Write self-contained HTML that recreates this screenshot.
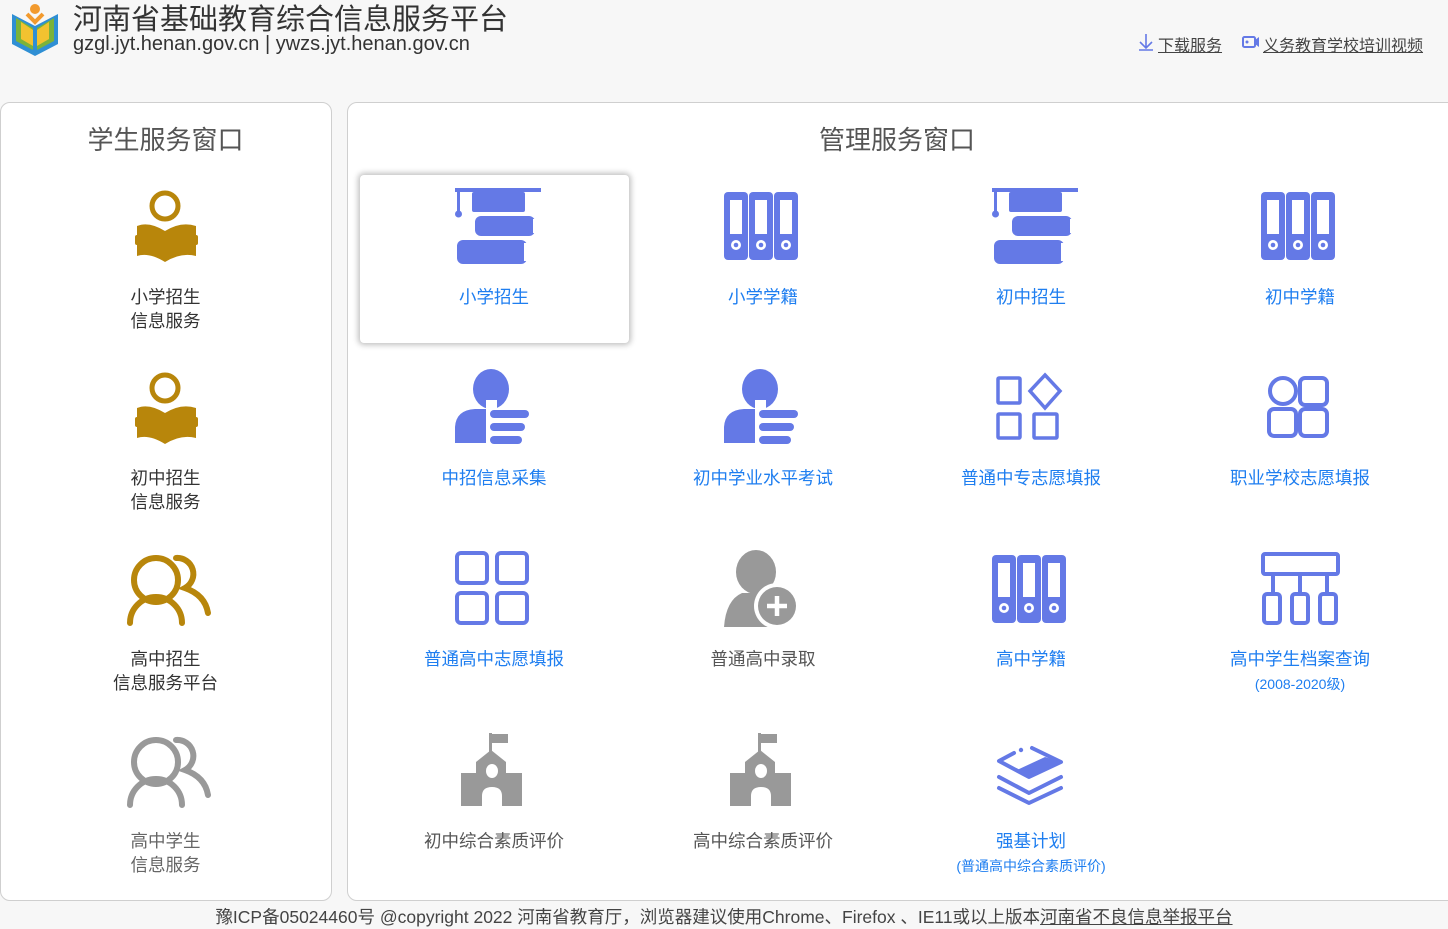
<!DOCTYPE html>
<html><head><meta charset="utf-8">
<style>
body{margin:0;width:1448px;height:926px;background:#f7f7f7;font-family:"Liberation Sans","Noto Sans CJK SC",sans-serif;position:relative;overflow:hidden}
.a{position:absolute}
.panel{position:absolute;background:#fff;border:1px solid #cfcfcf;border-radius:10px}
.t{position:absolute;text-align:center;font-size:17.5px;line-height:24px;color:#1e7ef0;width:268px}
.g{color:#555}
.lt{position:absolute;text-align:center;font-size:17.5px;line-height:24px;color:#333;width:331px;left:0}
.sm{font-size:14px;line-height:18px}
</style></head><body>
<div class="a" style="left:73px;top:-4px;font-size:29px;color:#333;white-space:nowrap">河南省基础教育综合信息服务平台</div>
<div class="a" style="left:73px;top:33px;font-size:20px;color:#333;white-space:nowrap">gzgl.jyt.henan.gov.cn | ywzs.jyt.henan.gov.cn</div>
<div class="a" style="left:1158px;top:32px;font-size:16px;color:#444;text-decoration:underline">下载服务</div>
<div class="a" style="left:1263px;top:32px;font-size:16px;color:#444;text-decoration:underline">义务教育学校培训视频</div>

<div class="panel" style="left:0;top:102px;width:330px;height:797px"></div>
<div class="panel" style="left:347px;top:102px;width:1110px;height:797px"></div>
<div class="a" style="left:360px;top:175px;width:269px;height:168px;background:#fff;border-radius:4px;box-shadow:0 0 6px 2px rgba(0,0,0,.25)"></div>

<div class="a" style="left:0;top:120px;width:331px;text-align:center;font-size:26px;color:#555">学生服务窗口</div>
<div class="a" style="left:347px;top:120px;width:1100px;text-align:center;font-size:26px;color:#555">管理服务窗口</div>

<svg class="a" style="left:0;top:0" width="1448" height="926">
<defs>
<g id="books" fill="#6479e6"><rect x="0" y="0" width="86" height="4"/><rect x="17" y="4" width="53" height="20" rx="2"/><rect x="2" y="2" width="3" height="22"/><circle cx="3.5" cy="26" r="3.5"/><rect x="20" y="28" width="60" height="20" rx="6"/><rect x="78" y="31" width="3" height="14" fill="#fff"/><rect x="2" y="52" width="70" height="24" rx="6"/><rect x="69" y="55" width="3" height="18" fill="#fff"/></g>
<g id="bind"><g fill="#6479e6"><rect x="0" y="0" width="24" height="68" rx="4"/><rect x="25" y="0" width="24" height="68" rx="4"/><rect x="50" y="0" width="24" height="68" rx="4"/></g><g fill="#fff"><rect x="6" y="8" width="12" height="34"/><rect x="31" y="8" width="12" height="34"/><rect x="56" y="8" width="12" height="34"/><circle cx="12" cy="53" r="5"/><circle cx="37" cy="53" r="5"/><circle cx="62" cy="53" r="5"/></g><g fill="#6479e6"><circle cx="12" cy="53" r="2.3"/><circle cx="37" cy="53" r="2.3"/><circle cx="62" cy="53" r="2.3"/></g></g>
<g id="plist" fill="#6479e6"><ellipse cx="36" cy="20" rx="18" ry="20"/><path d="M0 74V58Q1 41 20 40H34V74Z"/><path d="M31 31H42V74H31Z" fill="#fff"/><path d="M33 74V48Q33 42 39 42H40V74Z" fill="#fff"/><rect x="35" y="41" width="39" height="8" rx="4"/><rect x="35" y="54" width="35" height="8" rx="4"/><rect x="35" y="67" width="32" height="8" rx="4"/></g>
<g id="reader" fill="#b8860b"><circle cx="28" cy="18" r="13" fill="none" stroke="#b8860b" stroke-width="5"/><path d="M0 38Q12 33 28 43Q44 33 59 38V68Q44 64 28 74Q12 64 0 68Z"/><rect x="-2" y="47" width="4" height="10" rx="2"/><rect x="57" y="47" width="4" height="10" rx="2"/></g>
<g id="people" fill="none" stroke-width="6" stroke-linecap="round"><circle cx="29" cy="27" r="22"/><path d="M3 70A26 26 0 0 1 55 70"/><path d="M49 5A16 16 0 0 1 58 35Q78 42 81 60"/></g>
<g id="school" fill="#999"><rect x="28" y="0" width="3" height="20"/><path d="M31 1H47V10H31Z"/><path d="M30 17L45 29V40H61V73H41V63Q41 54 31 54Q21 54 21 63V73H0V40H15V29Z"/><ellipse cx="31" cy="38" rx="6" ry="7" fill="#fff"/></g>
</defs>
<path d="M12 14L35 26L58 14V44L35 56L12 44Z" fill="#2f8fd4"/><path d="M16 18L33 28V50L16 41Z" fill="#7bb33a"/><path d="M54 18L37 28V50L54 41Z" fill="#7bb33a"/><path d="M21 22L33 30V46L21 39Z" fill="#f2c230"/><path d="M49 22L37 30V46L49 39Z" fill="#f2c230"/><circle cx="35" cy="9" r="5" fill="#f29a2e"/><path d="M27 14L35 22L43 14" stroke="#f29a2e" stroke-width="4" fill="none"/>
<path d="M1146 34V47M1140 42L1146 48L1152 42M1139 50H1153" stroke="#6479e6" stroke-width="1.6" fill="none"/>
<rect x="1243" y="37" width="12" height="10" rx="1.5" stroke="#6479e6" stroke-width="2" fill="none"/><path d="M1255 40L1259 37V47L1255 44Z" fill="#6479e6"/><circle cx="1247" cy="42" r="1.5" fill="#6479e6"/>

<use href="#books" x="455" y="188"/><use href="#books" x="992" y="188"/>
<use href="#bind" x="724" y="192"/><use href="#bind" x="1261" y="192"/><use href="#bind" x="992" y="555"/>
<use href="#plist" x="455" y="369"/><use href="#plist" x="724" y="369"/>
<g fill="none" stroke="#6479e6" stroke-width="3.5"><rect x="998" y="378" width="22" height="25" rx="1"/><rect x="998" y="414" width="22" height="24" rx="1"/><rect x="1034" y="414" width="23" height="24" rx="1"/><path d="M1045 375L1060 391L1045 408L1030 391Z"/></g>
<g fill="none" stroke="#6479e6" stroke-width="4"><circle cx="1283" cy="391" r="13"/><rect x="1300" y="378" width="27" height="27" rx="5"/><rect x="1269" y="409" width="27" height="27" rx="5"/><rect x="1300" y="409" width="27" height="27" rx="5"/>
<rect x="457" y="553" width="30" height="30" rx="4"/><rect x="497" y="553" width="30" height="30" rx="4"/><rect x="457" y="593" width="30" height="30" rx="4"/><rect x="497" y="593" width="30" height="30" rx="4"/>
<rect x="1263" y="554" width="75" height="20" rx="2"/><path d="M1273 574V593M1300 574V593M1327 574V593"/><rect x="1264" y="594" width="16" height="29" rx="3"/><rect x="1292" y="594" width="16" height="29" rx="3"/><rect x="1320" y="594" width="16" height="29" rx="3"/></g>
<g fill="#999"><ellipse cx="756" cy="572" rx="20" ry="22"/><path d="M724 627Q726 600 742 593H770V627Z"/><circle cx="777" cy="606" r="23" fill="#fff"/><circle cx="777" cy="606" r="19"/><path d="M777 596V616M767 606H787" stroke="#fff" stroke-width="4.5"/></g>
<use href="#school" x="461" y="733"/><use href="#school" x="730" y="733"/>
<g fill="none" stroke="#6479e6" stroke-width="4" stroke-linecap="round" stroke-linejoin="round"><path d="M1014 753L999 761L1029 777L1061 762L1032 748"/><path d="M999 777L1029 793L1061 777"/><path d="M999 788L1029 803L1061 788"/></g>
<path d="M1029 777L1061 762L1045 757L1017 770Z" fill="#6479e6"/><circle cx="1021" cy="750" r="2.2" fill="#6479e6"/>
<use href="#reader" x="137" y="188"/><use href="#reader" x="137" y="370"/>
<use href="#people" x="127" y="553" stroke="#b8860b"/><use href="#people" x="127" y="735" stroke="#999"/>
</svg>

<div class="lt" style="top:285px">小学招生<br>信息服务</div>
<div class="lt" style="top:466px">初中招生<br>信息服务</div>
<div class="lt" style="top:647px">高中招生<br>信息服务平台</div>
<div class="lt" style="top:829px;color:#666">高中学生<br>信息服务</div>

<div class="t" style="left:360px;top:285px">小学招生</div>
<div class="t" style="left:629px;top:285px">小学学籍</div>
<div class="t" style="left:897px;top:285px">初中招生</div>
<div class="t" style="left:1166px;top:285px">初中学籍</div>
<div class="t" style="left:360px;top:466px">中招信息采集</div>
<div class="t" style="left:629px;top:466px">初中学业水平考试</div>
<div class="t" style="left:897px;top:466px">普通中专志愿填报</div>
<div class="t" style="left:1166px;top:466px">职业学校志愿填报</div>
<div class="t" style="left:360px;top:647px">普通高中志愿填报</div>
<div class="t g" style="left:629px;top:647px">普通高中录取</div>
<div class="t" style="left:897px;top:647px">高中学籍</div>
<div class="t" style="left:1166px;top:647px">高中学生档案查询<br><span class="sm">(2008-2020级)</span></div>
<div class="t g" style="left:360px;top:829px">初中综合素质评价</div>
<div class="t g" style="left:629px;top:829px">高中综合素质评价</div>
<div class="t" style="left:897px;top:829px">强基计划<br><span class="sm">(普通高中综合素质评价)</span></div>

<div class="a" style="left:0;top:904px;width:1448px;text-align:center;font-size:17.5px;color:#444;white-space:nowrap">豫ICP备05024460号 @copyright 2022 河南省教育厅，浏览器建议使用Chrome、Firefox 、IE11或以上版本<span style="text-decoration:underline">河南省不良信息举报平台</span></div>
</body></html>
